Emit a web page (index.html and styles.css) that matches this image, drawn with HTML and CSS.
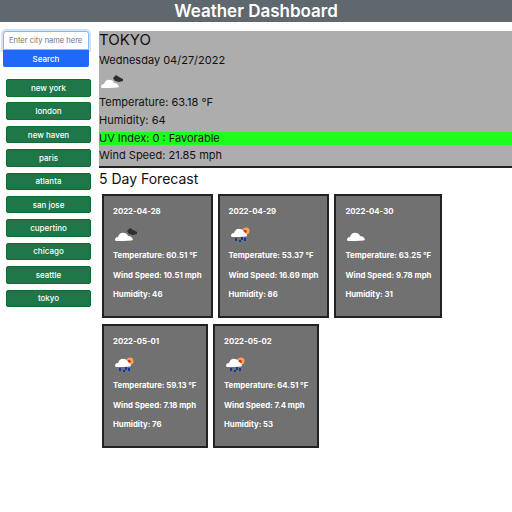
FILE: index.html
```html
<!DOCTYPE html>
<html lang="en">
<head>
    <meta charset="UTF-8">
    <meta name="viewport" content="width=device-width, initial-scale=1.0">
    <title>Weather Dashboard</title>
    <link rel="stylesheet" href="styles.css">
</head>

<body>
    <svg class="sprites" width="0" height="0">
        <defs>
            <symbol id="cloudDark" viewBox="0 0 24 16">
                <path d="M13 4 L16 1 L19 3 L23 5 L23 7 L19 8 L15 7Z" fill="#2e2e2e"/>
                <path d="M1 13 Q1 10 4 10 Q6 5 10 6 Q13 6 14 9 Q18 9 19 13 Q17 14 3 14 Q1 14 1 13Z" fill="#fff"/>
            </symbol>
            <symbol id="cloudLight" viewBox="0 0 24 16">
                <path d="M1 13 Q1 10 4 10 Q6 5 10 6 Q13 6 14 9 Q18 9 19 13 Q17 14 3 14 Q1 14 1 13Z" fill="#fff"/>
            </symbol>
            <symbol id="cloudRain" viewBox="0 0 24 16">
                <circle cx="16" cy="4" r="3.5" fill="#f5a84a"/>
                <circle cx="15" cy="4.5" r="1.8" fill="#e8281e"/>
                <path d="M1 9 Q1 6 4 6 Q6 1 10 2 Q13 2 14 5 Q17 6 17 9 Q16 10 3 10 Q1 10 1 9Z" fill="#fff"/>
                <rect x="5" y="11" width="2" height="3" fill="#123a9e"/>
                <rect x="11" y="10" width="2" height="3" fill="#123a9e"/>
                <rect x="9" y="13" width="2" height="2" fill="#123a9e"/>
                <rect x="14" y="11" width="2" height="3" fill="#123a9e"/>
            </symbol>
        </defs>
    </svg>

    <header class="topBar">Weather Dashboard</header>

    <div class="page">
        <aside class="sidebar">
            <form class="searchForm">
                <input class="cityInput" type="text" placeholder="Enter city name here">
                <button class="searchBtn" type="button">Search</button>
            </form>
            <div class="cityList">
                <button class="cityBtn" type="button">new york</button>
                <button class="cityBtn" type="button">london</button>
                <button class="cityBtn" type="button">new haven</button>
                <button class="cityBtn" type="button">paris</button>
                <button class="cityBtn" type="button">atlanta</button>
                <button class="cityBtn" type="button">san jose</button>
                <button class="cityBtn" type="button">cupertino</button>
                <button class="cityBtn" type="button">chicago</button>
                <button class="cityBtn" type="button">seattle</button>
                <button class="cityBtn" type="button">tokyo</button>
            </div>
        </aside>

        <main class="content">
            <section class="current">
                <h2 class="cityName">TOKYO</h2>
                <p class="line">Wednesday 04/27/2022</p>
                <svg class="currentIcon"><use href="#cloudDark"/></svg>
                <p class="line">Temperature: 63.18 °F</p>
                <p class="line">Humidity: 64</p>
                <p class="line uvGood">UV Index: 0 : Favorable</p>
                <p class="line">Wind Speed: 21.85 mph</p>
            </section>

            <h3 class="forecastTitle">5 Day Forecast</h3>

            <section class="forecast">
                <div class="card">
                    <p class="cardDate">2022-04-28</p>
                    <svg class="cardIcon"><use href="#cloudDark"/></svg>
                    <p class="cardLine">Temperature: 60.51 °F</p>
                    <p class="cardLine">Wind Speed: 10.51 mph</p>
                    <p class="cardLine">Humidity: 46</p>
                </div>
                <div class="card">
                    <p class="cardDate">2022-04-29</p>
                    <svg class="cardIcon"><use href="#cloudRain"/></svg>
                    <p class="cardLine">Temperature: 53.37 °F</p>
                    <p class="cardLine">Wind Speed: 16.69 mph</p>
                    <p class="cardLine">Humidity: 86</p>
                </div>
                <div class="card">
                    <p class="cardDate">2022-04-30</p>
                    <svg class="cardIcon"><use href="#cloudLight"/></svg>
                    <p class="cardLine">Temperature: 63.25 °F</p>
                    <p class="cardLine">Wind Speed: 9.78 mph</p>
                    <p class="cardLine">Humidity: 31</p>
                </div>
                <div class="card">
                    <p class="cardDate">2022-05-01</p>
                    <svg class="cardIcon"><use href="#cloudRain"/></svg>
                    <p class="cardLine">Temperature: 59.13 °F</p>
                    <p class="cardLine">Wind Speed: 7.18 mph</p>
                    <p class="cardLine">Humidity: 76</p>
                </div>
                <div class="card">
                    <p class="cardDate">2022-05-02</p>
                    <svg class="cardIcon"><use href="#cloudRain"/></svg>
                    <p class="cardLine">Temperature: 64.51 °F</p>
                    <p class="cardLine">Wind Speed: 7.4 mph</p>
                    <p class="cardLine">Humidity: 53</p>
                </div>
            </section>
        </main>
    </div>
</body>
</html>
```

FILE: styles.css
```css
* {
    box-sizing: border-box;
}

body {
    font-family: 'Inter', 'Liberation Sans', sans-serif;
    margin: 0;
    background-color: #fff;
    color: #212529;
}

p, h2, h3 {
    margin: 0;
    font-weight: 400;
}

.sprites {
    position: absolute;
}

.topBar {
    height: 22px;
    background-color: #60686f;
    color: #fff;
    font-size: 17px;
    font-weight: 600;
    line-height: 23px;
    text-align: center;
}

.page {
    display: flex;
    padding-top: 9px;
}

.sidebar {
    flex: 0 0 99px;
    padding-left: 3px;
}

.searchForm {
    display: flex;
    flex-direction: column;
    width: 86px;
}

.cityInput {
    height: 19px;
    padding: 0 5px;
    border: 1px solid #86b7fe;
    border-radius: 3px 3px 0 0;
    box-shadow: 0 0 0 2px #cfe2ff;
    font-family: inherit;
    font-size: 7.5px;
    outline: none;
}

.cityInput::placeholder {
    color: #6c757d;
}

.searchBtn {
    height: 17px;
    padding: 0;
    border: none;
    border-radius: 0 0 2px 2px;
    background-color: #2068f8;
    color: #fff;
    font-family: inherit;
    font-size: 8px;
    font-weight: 500;
}

.cityList {
    display: flex;
    flex-direction: column;
    gap: 5.9px;
    margin: 12px 0 0 3px;
    width: 85px;
}

.cityBtn {
    height: 17.5px;
    padding: 0;
    border: 1px solid #0d6e2d;
    border-radius: 2px;
    background-color: #1f7749;
    color: #fff;
    font-family: inherit;
    font-size: 8px;
    font-weight: 500;
}

.content {
    flex: 1;
    min-width: 0;
}

.current {
    height: 137px;
    border-bottom: 2px solid #222;
    background-color: #adadad;
    color: #111;
}

.cityName {
    font-size: 15px;
    line-height: 18px;
}

.line {
    font-size: 11px;
    line-height: 13px;
    margin-bottom: 4.75px;
}

.cityName + .line {
    margin-top: 5px;
}

.currentIcon {
    display: block;
    width: 24px;
    height: 16px;
    margin: 7px 0 6px 1px;
}

.uvGood {
    background-color: #1cff1c;
}

.forecastTitle {
    font-size: 14px;
    line-height: 17px;
    padding-top: 2px;
    color: #111;
}

.forecast {
    display: flex;
    flex-wrap: wrap;
    gap: 6px 5px;
    padding: 7px 0 0 3px;
}

.card {
    flex: 0 0 auto;
    min-width: 106px;
    height: 124px;
    padding: 10px 9px 0;
    border: 2px solid #222;
    background-color: #717171;
    color: #fff;
    font-size: 7.8px;
}

.cardDate {
    font-weight: 700;
    line-height: 10px;
}

.cardIcon {
    display: block;
    width: 24px;
    height: 16px;
    margin: 11px 0 7px 1px;
}

.cardLine {
    font-weight: 700;
    line-height: 10px;
    margin-bottom: 9.5px;
    white-space: nowrap;
}
```
